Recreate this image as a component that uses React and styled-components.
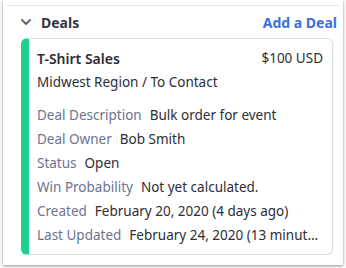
import React from 'react';
import styled, { createGlobalStyle } from 'styled-components';

const GlobalStyle = createGlobalStyle`
  html, body {
    margin: 0;
    padding: 0;
    background: #ffffff;
  }
  body {
    font-family: 'Noto Sans', 'Liberation Sans', sans-serif;
  }
`;

const Page = styled.div`
  width: 346px;
  height: 268px;
  padding: 0 3px;
  box-sizing: border-box;
`;

const Panel = styled.div`
  height: 265px;
  background: #ffffff;
  box-shadow: 0 1px 3px rgba(0, 0, 0, 0.45);
  padding: 5px 4px 0;
  box-sizing: border-box;
`;

const Divider = styled.div`
  height: 1px;
  background: #e3e4e8;
`;

const Section = styled.div`
  padding: 0 2px 0 14px;
`;

const Header = styled.div`
  display: flex;
  align-items: center;
  justify-content: space-between;
  height: 32px;
`;

const Toggle = styled.div`
  display: flex;
  align-items: center;
  gap: 10px;
  font-size: 14px;
  font-weight: 700;
  color: #33363d;
`;

const AddLink = styled.a`
  font-size: 14px;
  font-weight: 700;
  color: #3a6fe3;
  text-decoration: none;
  cursor: pointer;
`;

const Card = styled.div`
  margin-right: 4px;
  border: 1px solid #d8dce6;
  border-left: 8px solid #1fd18e;
  border-radius: 6px;
  padding: 8px 9px 7px 8px;
  color: #2c2e34;
`;

const TitleRow = styled.div`
  display: flex;
  justify-content: space-between;
  align-items: center;
  font-size: 13.5px;
  line-height: 23px;
`;

const Title = styled.span`
  font-size: 14px;
  font-weight: 600;
`;

const Subtitle = styled.div`
  font-size: 13.5px;
  line-height: 24px;
  margin-bottom: 9px;
`;

const Row = styled.div`
  font-size: 13.5px;
  line-height: 24px;
  white-space: nowrap;
  overflow: hidden;
  text-overflow: ellipsis;
`;

const Label = styled.span`
  color: #6b7390;
  margin-right: 8px;
`;

const Chevron = () => (
  <svg width="10" height="6" viewBox="0 0 10 6" style={{ display: 'block' }}>
    <path d="M1 1l4 4 4-4" fill="none" stroke="#5b6275" strokeWidth="1.8" strokeLinecap="round" strokeLinejoin="round" />
  </svg>
);

const fields = [
  ['Deal Description', 'Bulk order for event'],
  ['Deal Owner', 'Bob Smith'],
  ['Status', 'Open'],
  ['Win Probability', 'Not yet calculated.'],
  ['Created', 'February 20, 2020 (4 days ago)'],
  ['Last Updated', 'February 24, 2020 (13 minutes ago)'],
];

export default function App() {
  return (
    <Page>
      <GlobalStyle />
      <Panel>
        <Divider />
        <Section>
          <Header>
            <Toggle>
              <Chevron />
              Deals
            </Toggle>
            <AddLink>Add a Deal</AddLink>
          </Header>
          <Card>
            <TitleRow>
              <Title>T-Shirt Sales</Title>
              <span>$100 USD</span>
            </TitleRow>
            <Subtitle>Midwest Region / To Contact</Subtitle>
            {fields.map(([label, value]) => (
              <Row key={label}>
                <Label>{label}</Label>
                {value}
              </Row>
            ))}
          </Card>
        </Section>
      </Panel>
    </Page>
  );
}
